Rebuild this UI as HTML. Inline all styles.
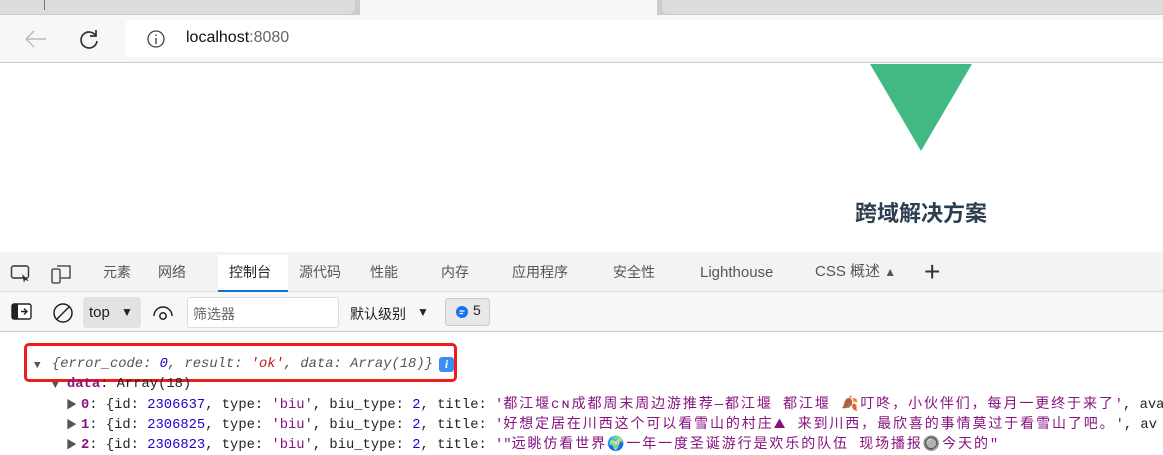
<!DOCTYPE html>
<html><head><meta charset="utf-8"><style>
*{margin:0;padding:0;box-sizing:border-box}
body{width:1163px;height:442px;overflow:hidden;background:#fff;font-family:"Liberation Sans","Noto Sans CJK SC",sans-serif;position:relative}
.abs{position:absolute}
.mono{font-family:"Liberation Mono","Noto Sans CJK SC",monospace;font-size:13.8px;white-space:nowrap;line-height:18px}
.cj{font-size:14px;letter-spacing:1.9px}
.tab{position:absolute;top:262px;font-size:14px;color:#555;line-height:20px}
</style></head><body>
<!-- tab strip -->
<div class="abs" style="left:0;top:0;width:1163px;height:15px;background:#cccccc"></div>
<div class="abs" style="left:0;top:0;width:355px;height:14px;background:#dcdcdc;border-radius:0 0 6px 0"></div>
<div class="abs" style="left:44px;top:0;width:1px;height:10px;background:#777"></div>
<div class="abs" style="left:360px;top:0;width:297px;height:15px;background:#f7f7f7"></div>
<div class="abs" style="left:662px;top:0;width:501px;height:14px;background:#dcdcdc;border-radius:0 0 0 6px"></div>
<!-- toolbar -->
<div class="abs" style="left:0;top:15px;width:1163px;height:48px;background:#f7f7f7;border-bottom:1px solid #c8c8c8"></div>
<svg class="abs" style="left:22px;top:28px" width="26" height="22"><path d="M4 11H24M4 11L12 3M4 11L12 19" stroke="#bbb" stroke-width="1.5" fill="none"/></svg>
<svg class="abs" style="left:78px;top:27px" width="24" height="24"><path d="M18 9A8 8 0 1 0 19 14M18 3V9H12" stroke="#333" stroke-width="1.7" fill="none"/></svg>
<div class="abs" style="left:125px;top:20px;width:1040px;height:37px;background:#fff;border-radius:6px 0 0 6px"></div>
<svg class="abs" style="left:146px;top:29px" width="20" height="20"><circle cx="10" cy="10" r="8" stroke="#444" stroke-width="1.3" fill="none"/><path d="M10 9V15M10 5.5V7" stroke="#444" stroke-width="1.4"/></svg>
<div class="abs" style="left:186px;top:29px;font-size:16px;color:#111">localhost<span style="color:#666">:8080</span></div>
<!-- page -->
<svg class="abs" style="left:868px;top:64px" width="106" height="90"><polygon points="2,0 104,0 53,87" fill="#42b983"/></svg>
<div class="abs" style="left:771px;top:200px;width:300px;text-align:center;font-size:22px;font-weight:bold;color:#2c3e50;line-height:28px">跨域解决方案</div>
<!-- devtools tabs -->
<div class="abs" style="left:0;top:252px;width:1163px;height:40px;background:#f3f3f3;border-bottom:1px solid #ddd"></div>
<svg class="abs" style="left:10px;top:264px" width="22" height="20"><rect x="1.5" y="2" width="17" height="12" rx="2" stroke="#333" stroke-width="1.4" fill="none"/><path d="M12 10L19 17L15 16L14 19Z" fill="#333"/></svg>
<svg class="abs" style="left:50px;top:263px" width="24" height="22"><rect x="2" y="6" width="8" height="14" rx="1.5" stroke="#333" stroke-width="1.3" fill="none"/><path d="M7 3H20V15H11" stroke="#333" stroke-width="1.3" fill="none"/></svg>
<div class="tab" style="left:103px">元素</div>
<div class="tab" style="left:158px">网络</div>
<div class="abs" style="left:218px;top:255px;width:70px;height:37px;background:#fff;border-bottom:2px solid #0a74d6"></div>
<div class="tab" style="left:229px;color:#222">控制台</div>
<div class="tab" style="left:299px">源代码</div>
<div class="tab" style="left:370px">性能</div>
<div class="tab" style="left:441px">内存</div>
<div class="tab" style="left:512px">应用程序</div>
<div class="tab" style="left:613px">安全性</div>
<div class="tab" style="left:700px;top:263px;font-size:15px">Lighthouse</div>
<div class="tab" style="left:815px;font-size:15px">CSS 概述 <span style="font-size:12px">▲</span></div>
<div class="abs" style="left:924px;top:256px;font-size:28px;color:#333;font-weight:300">+</div>
<!-- console toolbar -->
<div class="abs" style="left:0;top:292px;width:1163px;height:40px;background:#f7f7f7;border-bottom:1px solid #ccc"></div>
<svg class="abs" style="left:11px;top:303px" width="22" height="18"><rect x="1" y="1" width="19" height="15" rx="2" fill="#fff" stroke="#222" stroke-width="1.4"/><rect x="1" y="1" width="6" height="15" fill="#222"/><path d="M10 8.5H16M13 5.5L16 8.5L13 11.5" stroke="#222" stroke-width="1.4" fill="none"/></svg>
<svg class="abs" style="left:52px;top:302px" width="22" height="22"><circle cx="11" cy="11" r="9" stroke="#222" stroke-width="1.5" fill="none"/><path d="M4.5 17.5L17.5 4.5" stroke="#222" stroke-width="1.5"/></svg>
<div class="abs" style="left:83px;top:297px;width:58px;height:31px;background:#e3e3e3;border-radius:3px"></div>
<div class="abs" style="left:89px;top:304px;font-size:15px;color:#222">top</div>
<div class="abs" style="left:121px;top:305px;font-size:12px;color:#222">▼</div>
<svg class="abs" style="left:152px;top:304px" width="22" height="16"><path d="M2 12A9 9 0 0 1 20 12" stroke="#222" stroke-width="1.5" fill="none"/><circle cx="11" cy="12" r="3.2" stroke="#222" stroke-width="1.5" fill="none"/></svg>
<div class="abs" style="left:187px;top:297px;width:152px;height:31px;background:#fff;border:1px solid #ddd;border-radius:3px"></div>
<div class="abs" style="left:193px;top:304px;font-size:14px;color:#666">筛选器</div>
<div class="abs" style="left:350px;top:304px;font-size:14px;color:#222">默认级别</div>
<div class="abs" style="left:417px;top:305px;font-size:12px;color:#222">▼</div>
<div class="abs" style="left:445px;top:298px;width:45px;height:28px;background:#e8e8e8;border:1px solid #ccc;border-radius:3px"></div>
<svg class="abs" style="left:455px;top:305px" width="14" height="14"><circle cx="7" cy="7" r="6" fill="#1a73e8"/><path d="M4.5 6H9.5M4.5 8.5H8" stroke="#fff" stroke-width="1.2"/></svg>
<div class="abs" style="left:473px;top:302px;font-size:14px;color:#222">5</div>
<!-- console -->
<div class="abs" style="left:24px;top:343px;width:433px;height:39px;border:3px solid #ee1c1c;border-radius:5px"></div>
<div class="abs mono" style="left:34px;top:357px;color:#555;font-size:11px">▼</div>
<div class="abs mono" style="left:52px;top:356px;color:#555;font-style:italic">{error_code: <span style="color:#1c00cf">0</span>, result: <span style="color:#c41a16">'ok'</span>, data: Array(18)}</div>
<div class="abs" style="left:439px;top:357px;width:15px;height:15px;background:#3a8ef0;border-radius:3px;color:#fff;font-size:12px;font-weight:bold;text-align:center;line-height:15px;font-family:'Liberation Serif',serif;font-style:italic">i</div>
<div class="abs mono" style="left:52px;top:377px;color:#555;font-size:11px">▼</div>
<div class="abs mono" style="left:67px;top:376px;color:#222"><span style="color:#881280;font-weight:bold">data</span>: Array(18)</div>
<div class="abs mono" style="left:66px;top:397px;color:#555;font-size:11px">▶</div>
<div class="abs mono" style="left:81px;top:396px;color:#222"><span style="color:#881280;font-weight:bold">0</span>: {id: <span style="color:#1c00cf">2306637</span>, type: <span style="color:#881280">'biu'</span>, biu_type: <span style="color:#1c00cf">2</span>, title: <span style="color:#881280">'<span class="cj">都江堰ᴄɴ成都周末周边游推荐—都江堰 都江堰 🍂叮咚，小伙伴们，每月一更终于来了</span>'</span>, avat</div>
<div class="abs mono" style="left:66px;top:417px;color:#555;font-size:11px">▶</div>
<div class="abs mono" style="left:81px;top:416px;color:#222"><span style="color:#881280;font-weight:bold">1</span>: {id: <span style="color:#1c00cf">2306825</span>, type: <span style="color:#881280">'biu'</span>, biu_type: <span style="color:#1c00cf">2</span>, title: <span style="color:#881280">'<span class="cj">好想定居在川西这个可以看雪山的村庄⛰ 来到川西，最欣喜的事情莫过于看雪山了吧。</span>'</span>, av</div>
<div class="abs mono" style="left:66px;top:437px;color:#555;font-size:11px">▶</div>
<div class="abs mono" style="left:81px;top:436px;color:#222"><span style="color:#881280;font-weight:bold">2</span>: {id: <span style="color:#1c00cf">2306823</span>, type: <span style="color:#881280">'biu'</span>, biu_type: <span style="color:#1c00cf">2</span>, title: <span style="color:#881280">'"<span class="cj">远眺仿看世界🌍一年一度圣诞游行是欢乐的队伍 现场播报🔘今天的</span>"</span></div>
</body></html>
